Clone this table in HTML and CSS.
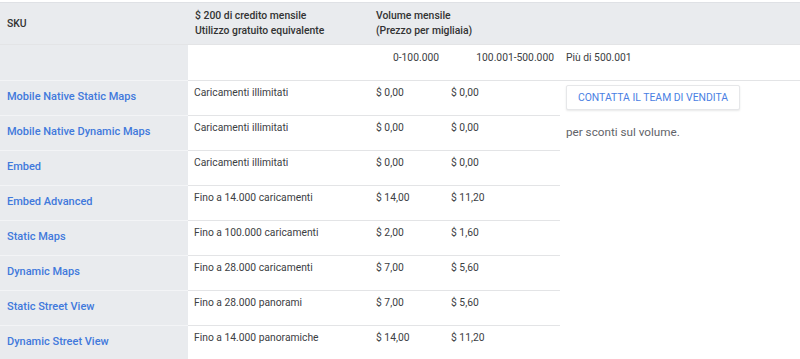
FILE: index.html
```html
<!DOCTYPE html>
<html lang="it">
<head>
<meta charset="utf-8">
<title>Prezzi Maps</title>
<link rel="stylesheet" href="styles.css">
</head>
<body>
<div class="pricing">
  <div class="hd sku-hd">SKU</div>
  <div class="hd">$ 200 di credito mensile<br>Utilizzo gratuito equivalente</div>
  <div class="hd vol-hd">Volume mensile<br>(Prezzo per migliaia)</div>

  <div class="sku range"></div>
  <div class="cell range"></div>
  <div class="cell range num">0-100.000</div>
  <div class="cell range num">100.001-500.000</div>
  <div class="cell range">Più di 500.001</div>

  <div class="side">
    <button class="contact">CONTATTA IL TEAM DI VENDITA</button>
    <p class="note">per sconti sul volume.</p>
  </div>

  <div class="sku"><a href="#">Mobile Native Static Maps</a></div>
  <div class="cell">Caricamenti illimitati</div>
  <div class="cell">$ 0,00</div>
  <div class="cell">$ 0,00</div>

  <div class="sku"><a href="#">Mobile Native Dynamic Maps</a></div>
  <div class="cell">Caricamenti illimitati</div>
  <div class="cell">$ 0,00</div>
  <div class="cell">$ 0,00</div>

  <div class="sku"><a href="#">Embed</a></div>
  <div class="cell">Caricamenti illimitati</div>
  <div class="cell">$ 0,00</div>
  <div class="cell">$ 0,00</div>

  <div class="sku"><a href="#">Embed Advanced</a></div>
  <div class="cell">Fino a 14.000 caricamenti</div>
  <div class="cell">$ 14,00</div>
  <div class="cell">$ 11,20</div>

  <div class="sku"><a href="#">Static Maps</a></div>
  <div class="cell">Fino a 100.000 caricamenti</div>
  <div class="cell">$ 2,00</div>
  <div class="cell">$ 1,60</div>

  <div class="sku"><a href="#">Dynamic Maps</a></div>
  <div class="cell">Fino a 28.000 caricamenti</div>
  <div class="cell">$ 7,00</div>
  <div class="cell">$ 5,60</div>

  <div class="sku"><a href="#">Static Street View</a></div>
  <div class="cell">Fino a 28.000 panorami</div>
  <div class="cell">$ 7,00</div>
  <div class="cell">$ 5,60</div>

  <div class="sku"><a href="#">Dynamic Street View</a></div>
  <div class="cell">Fino a 14.000 panoramiche</div>
  <div class="cell">$ 14,00</div>
  <div class="cell">$ 11,20</div>
</div>
</body>
</html>
```
FILE: styles.css
```css
html, body {
  margin: 0;
  padding: 0;
  background: #fff;
}
body {
  font-family: Roboto, "Liberation Sans", Arial, sans-serif;
  font-size: 10.3px;
  color: #3c4043;
  overflow: hidden;
}
.pricing {
  margin-top: 2px;
  display: grid;
  grid-template-columns: 188px 182px 75px 115px 1fr;
  grid-template-rows: 42px 36px repeat(8, 35px);
}
.hd {
  background: #e9ebee;
  border-top: 1px solid #dfe1e5;
  padding: 5px 7px 0;
  line-height: 15px;
  font-weight: 500;
  color: #333;
  font-size: 10.4px;
}
.sku-hd {
  display: flex;
  align-items: center;
  padding-top: 0;
}
.vol-hd {
  grid-column: 3 / 6;
  padding-left: 6px;
}
.sku {
  background: #e9ebee;
  border-top: 1px solid #f3f4f6;
  padding: 9px 7px 0;
  line-height: 14px;
}
.sku a {
  color: #4179dc;
  font-weight: 500;
  font-size: 11px;
  text-decoration: none;
}
.cell {
  border-top: 1px solid #e3e4e6;
  padding: 5px 6px 0;
  line-height: 14px;
  white-space: nowrap;
}
.range {
  padding-top: 6px;
}
.sku.range {
  border-top-color: #e3e4e6;
}
.num {
  text-align: right;
}
.side {
  grid-column: 5;
  grid-row: 3 / span 8;
  border-top: 1px solid #e3e4e6;
  padding: 4px 6px 0;
}
.contact {
  display: block;
  box-sizing: border-box;
  width: 174px;
  height: 25px;
  padding: 0;
  background: #fff;
  border: 1px solid #e6e7e9;
  border-radius: 2px;
  box-shadow: 0 1px 2px rgba(60, 64, 67, 0.12);
  color: #4a80e3;
  font-family: Roboto, "Liberation Sans", Arial, sans-serif;
  font-size: 10.4px;
  cursor: pointer;
}
.note {
  margin: 14px 0 0;
  font-size: 11.7px;
  color: #5f6368;
  line-height: 16px;
}
```
